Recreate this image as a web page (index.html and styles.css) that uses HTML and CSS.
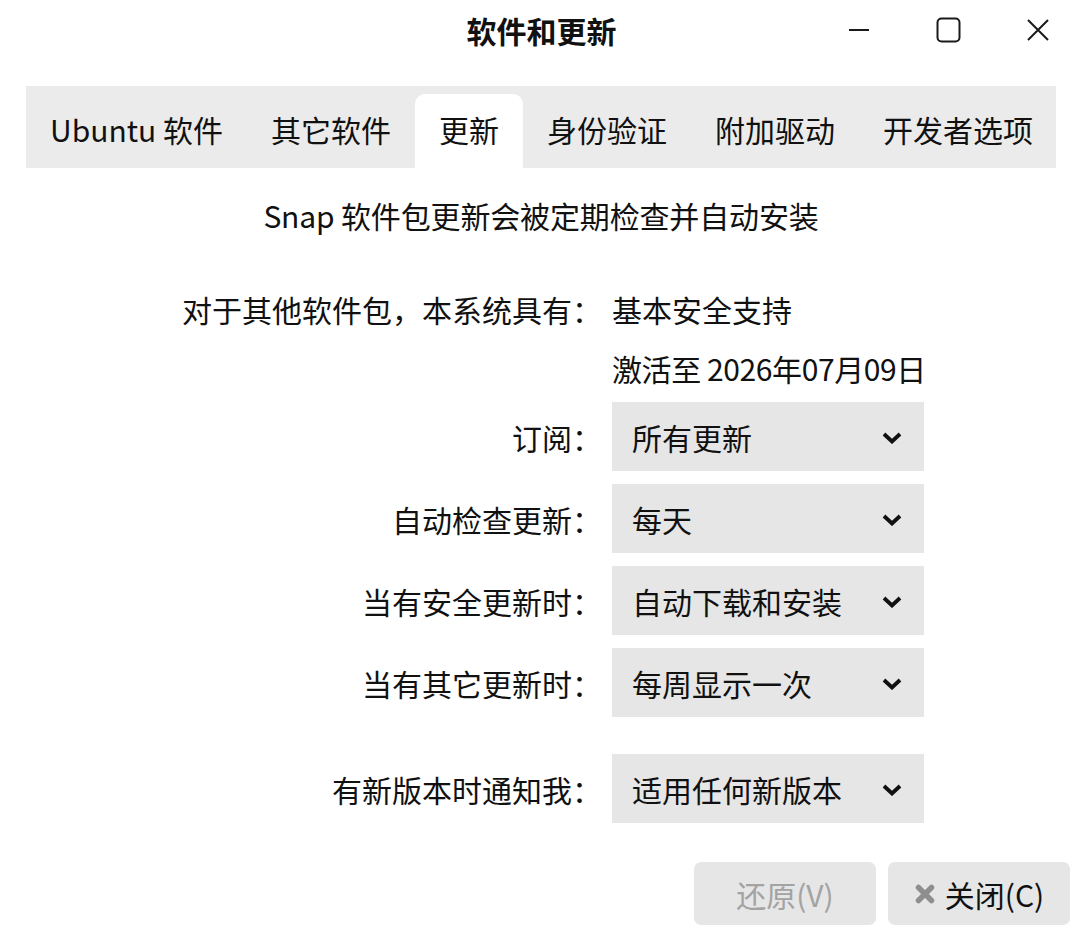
FILE: index.html
```html
<!DOCTYPE html>
<html lang="zh-CN">
<head>
<meta charset="utf-8">
<title>软件和更新</title>
<link rel="stylesheet" href="styles.css">
</head>
<body>
<div class="window">
  <header class="titlebar">
    <div class="tb-side"></div>
    <div class="title">软件和更新</div>
    <div class="tb-side controls">
      <div class="ctl">
        <svg width="22" height="4" viewBox="0 0 22 4"><line x1="1" y1="2" x2="21" y2="2" stroke="#1a1a1a" stroke-width="2"/></svg>
      </div>
      <div class="ctl">
        <svg width="25" height="26" viewBox="0 0 25 26"><rect x="1.5" y="1.5" width="22" height="23" rx="4" fill="none" stroke="#1a1a1a" stroke-width="2"/></svg>
      </div>
      <div class="ctl">
        <svg width="22" height="22" viewBox="0 0 22 22"><path d="M1 1 L21 21 M21 1 L1 21" stroke="#1a1a1a" stroke-width="2" fill="none"/></svg>
      </div>
    </div>
  </header>

  <main class="content">
    <nav class="tabs">
      <div class="tab">Ubuntu 软件</div>
      <div class="tab">其它软件</div>
      <div class="tab active">更新</div>
      <div class="tab">身份验证</div>
      <div class="tab">附加驱动</div>
      <div class="tab">开发者选项</div>
    </nav>

    <p class="notice">Snap 软件包更新会被定期检查并自动安装</p>

    <section class="form">
      <div class="row text-row">
        <div class="label">对于其他软件包，本系统具有：</div>
        <div class="value">基本安全支持</div>
      </div>
      <div class="row text-row r2">
        <div class="label"></div>
        <div class="value date">激活至 2026年07月09日</div>
      </div>
      <div class="row dd-row first">
        <div class="label">订阅：</div>
        <div class="dropdown"><span>所有更新</span><svg class="chev" width="20" height="12" viewBox="0 0 20 12"><polyline points="2,2 10,9.5 18,2" fill="none" stroke="#111" stroke-width="3.8"/></svg></div>
      </div>
      <div class="row dd-row">
        <div class="label">自动检查更新：</div>
        <div class="dropdown"><span>每天</span><svg class="chev" width="20" height="12" viewBox="0 0 20 12"><polyline points="2,2 10,9.5 18,2" fill="none" stroke="#111" stroke-width="3.8"/></svg></div>
      </div>
      <div class="row dd-row">
        <div class="label">当有安全更新时：</div>
        <div class="dropdown"><span>自动下载和安装</span><svg class="chev" width="20" height="12" viewBox="0 0 20 12"><polyline points="2,2 10,9.5 18,2" fill="none" stroke="#111" stroke-width="3.8"/></svg></div>
      </div>
      <div class="row dd-row">
        <div class="label">当有其它更新时：</div>
        <div class="dropdown"><span>每周显示一次</span><svg class="chev" width="20" height="12" viewBox="0 0 20 12"><polyline points="2,2 10,9.5 18,2" fill="none" stroke="#111" stroke-width="3.8"/></svg></div>
      </div>
      <div class="row dd-row spaced">
        <div class="label">有新版本时通知我：</div>
        <div class="dropdown"><span>适用任何新版本</span><svg class="chev" width="20" height="12" viewBox="0 0 20 12"><polyline points="2,2 10,9.5 18,2" fill="none" stroke="#111" stroke-width="3.8"/></svg></div>
      </div>
    </section>
  </main>

  <footer class="actions">
    <button class="btn disabled">还原(V)</button>
    <button class="btn"><svg class="x-icon" width="22" height="22" viewBox="0 0 22 22"><path d="M4.5 4.5 L17.5 17.5 M17.5 4.5 L4.5 17.5" stroke="#8e8e8e" stroke-width="5.5" stroke-linecap="round" fill="none"/></svg>关闭(C)</button>
  </footer>
</div>
</body>
</html>
```

FILE: styles.css
```css
* { box-sizing: border-box; }

html, body {
  margin: 0;
  padding: 0;
  background: #ffffff;
}

body {
  font-family: "Noto Sans CJK SC", "Noto Sans", sans-serif;
  font-size: 30px;
  color: #111111;
}

.window {
  width: 1082px;
  height: 938px;
  background: #ffffff;
  overflow: hidden;
}

.titlebar {
  height: 64px;
  display: grid;
  grid-template-columns: 1fr auto 1fr;
  align-items: start;
}

.title {
  font-weight: 700;
  font-size: 30px;
  line-height: 60px;
  padding-left: 1px;
}

.controls {
  display: flex;
  justify-content: flex-end;
  align-items: center;
  height: 60px;
}

.ctl {
  width: 88px;
  height: 60px;
  display: flex;
  align-items: center;
  justify-content: center;
}

.ctl:nth-child(1) { width: 88px; padding-right: 2px; }
.ctl:nth-child(2) { width: 90px; padding-right: 2px; }

.content {
  padding: 22px 26px 0 26px;
}

.tabs {
  display: flex;
  height: 82px;
  background: #ebebeb;
}

.tab {
  margin-top: 8px;
  height: 74px;
  padding: 0 24px 4px 24px;
  display: flex;
  align-items: center;
  line-height: 40px;
  white-space: nowrap;
  border-radius: 10px 10px 0 0;
}

.tab.active {
  background: #ffffff;
}

.notice {
  margin: 0;
  padding-top: 27px;
  padding-bottom: 2px;
  line-height: 40px;
  text-align: center;
  letter-spacing: -0.15px;
}

.form {
  margin-top: 52px;
  display: flex;
  flex-direction: column;
}

.row {
  display: flex;
  align-items: center;
}

.label {
  width: 576px;
  text-align: right;
  white-space: nowrap;
  line-height: 40px;
}

.value {
  margin-left: 10px;
  line-height: 40px;
  white-space: nowrap;
}

.date {
  letter-spacing: -0.4px;
}

.text-row { height: 40px; }
.r2 { margin-top: 19px; }

.dd-row { margin-top: 13px; }
.dd-row.first { margin-top: 14px; }
.dd-row.spaced { margin-top: 37px; }

.dropdown {
  margin-left: 10px;
  width: 312px;
  height: 69px;
  background: #e6e6e6;
  display: flex;
  align-items: center;
  justify-content: space-between;
  padding: 0 22px 0 20px;
  line-height: 40px;
}

.chev {
  display: block;
  margin-top: 2px;
}

.actions {
  margin-top: 39px;
  display: flex;
  justify-content: flex-end;
  gap: 12px;
  padding-right: 12px;
}

.btn {
  width: 182px;
  height: 63px;
  border: none;
  border-radius: 7px;
  background: #e6e6e6;
  font-family: "Noto Sans CJK SC", "Noto Sans", sans-serif;
  font-size: 30px;
  color: #111111;
  display: flex;
  align-items: center;
  justify-content: center;
  gap: 9px;
  padding: 0;
}

.btn.disabled {
  color: #a3a3a3;
}

.x-icon {
  display: block;
}
```
